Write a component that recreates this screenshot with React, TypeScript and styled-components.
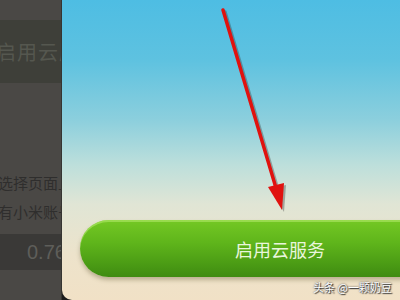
import styled, { createGlobalStyle } from "styled-components";

const Global = createGlobalStyle`
    html, body { margin: 0; padding: 0; }
    body {
        width: 400px; height: 300px; overflow: hidden;
        font-family: "Noto Sans CJK SC", "Noto Sans", sans-serif;
        background: #1b1b1b;
    }
`

const Screen = styled.div`
    display: flex;
    width: 400px; height: 300px;
    background: #1b1b1b;
    overflow: hidden;
`

const Backdrop = styled.div`
    display: flex; flex-direction: column;
    width: 62px; flex-shrink: 0;
    padding-top: 20px; box-sizing: border-box;
    background: #4a4845;
    border-right: 1px solid #363532;
    overflow: hidden;
    white-space: nowrap;
`
const DimButton = styled.div`
    display: flex; align-items: center;
    height: 63px; margin-left: -4px;
    background: #3e3f39;
    color: #55574f; font-size: 20px; letter-spacing: 1px;
`
const DimText = styled.div`
    margin-left: -2px;
    color: #2f2e2d; font-size: 15px; line-height: 29px;
`
const DimLines = styled.div`
    display: flex; flex-direction: column;
    margin-top: 85px;
`
const DimValue = styled.div`
    display: flex; align-items: center;
    height: 36px; margin-top: 8px; padding-left: 27px;
    background: #3a3937;
    color: #5e5e5a; font-family: "Liberation Sans", sans-serif; font-size: 20px;
`

const Dialog = styled.div`
    position: relative;
    flex: 1;
    display: flex; flex-direction: column; justify-content: flex-end;
    padding: 0 0 23px 18px;
    border-bottom-left-radius: 10px;
    background: linear-gradient(180deg, #4ebde3 0%, #5ec2e0 20%, #8ccfdd 40%, #bddfdb 55%, #e0e5d5 68%, #ede3cb 85%, #f1e1c6 100%);
    overflow: hidden;
`

const EnableButton = styled.button`
    display: flex; align-items: center; justify-content: center;
    height: 57px; width: calc(100% + 20px);
    padding: 0;
    border: none; border-radius: 29px 0 0 29px;
    background: linear-gradient(180deg, #74c824 0%, #5fb51b 40%, #4c9d15 75%, #3f8b11 100%);
    box-shadow: inset 0 2px 0 rgba(190, 240, 120, 0.5), 0 3px 4px rgba(90, 80, 40, 0.35);
    color: #e9f6dc; font-family: inherit; font-size: 18px;
`
const ButtonLabel = styled.span`
    margin-left: 60px;
`

const Arrow = styled.svg`
    position: absolute; left: 0; top: 0;
    pointer-events: none;
`

const Watermark = styled.div`
    position: absolute; right: 8px; bottom: 5px;
    color: #ffffff; font-size: 11px;
    text-shadow: 0 0 2px #333, 1px 1px 1px #333;
`

export default function App() {
    return (
        <>
            <Global />
            <Screen>
                <Backdrop>
                    <DimButton>启用云服务</DimButton>
                    <DimLines>
                        <DimText>选择页面上的内容</DimText>
                        <DimText>有小米账号</DimText>
                    </DimLines>
                    <DimValue>0.76</DimValue>
                </Backdrop>
                <Dialog>
                    <Arrow width="337" height="300" viewBox="0 0 337 300">
                        <g transform="translate(2 2)" opacity="0.35">
                            <line x1="161" y1="10" x2="214" y2="188" stroke="#333" strokeWidth="3.5" strokeLinecap="round" />
                            <polygon points="220,210 206,187 222,183" fill="#333" />
                        </g>
                        <line x1="161" y1="10" x2="214" y2="188" stroke="#e0120f" strokeWidth="3.5" strokeLinecap="round" />
                        <polygon points="220,210 206,187 222,183" fill="#e0120f" />
                    </Arrow>
                    <EnableButton>
                        <ButtonLabel>启用云服务</ButtonLabel>
                    </EnableButton>
                    <Watermark>头条 @一颗奶豆</Watermark>
                </Dialog>
            </Screen>
        </>
    )
}
